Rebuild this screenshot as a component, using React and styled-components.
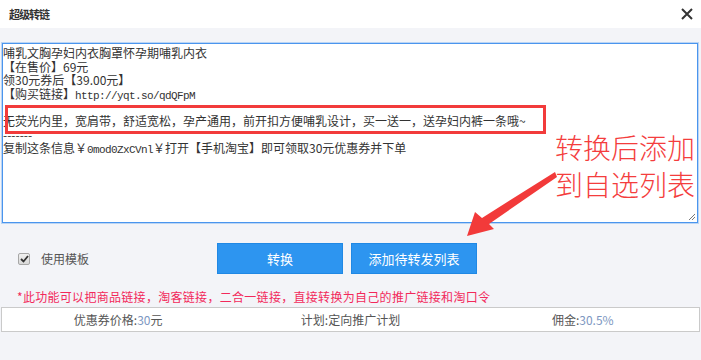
import React from 'react';
import styled, { createGlobalStyle } from 'styled-components';

const GlobalStyle = createGlobalStyle`
  html, body {
    margin: 0;
    padding: 0;
    background: #f3f4f8;
  }
  body {
    font-family: "Noto Sans CJK SC", "Microsoft YaHei", sans-serif;
  }
`;

const Dialog = styled.div`
  position: relative;
  width: 701px;
  height: 360px;
  background: #f3f4f8;
  overflow: hidden;
  display: flex;
  flex-direction: column;
`;

const TitleBar = styled.div`
  flex: none;
  height: 28px;
  background: #fff;
  display: flex;
  align-items: center;
  justify-content: space-between;
  padding: 0 8px 0 9px;
`;

const Title = styled.h1`
  margin: 0;
  font-size: 11px;
  font-weight: 700;
  color: #333;
  letter-spacing: -1px;
`;

const CloseButton = styled.button`
  border: 0;
  padding: 0;
  background: none;
  width: 12px;
  height: 12px;
  display: flex;
  cursor: pointer;
`;

const Editor = styled.div`
  position: relative;
  margin: 15px 3px 0 2px;
  height: 180px;
  box-sizing: border-box;
  padding: 2px 0 0 0;
  background: #fff;
  border: 1px solid #4a95ee;
  box-shadow: 0 0 0 1px rgba(120, 175, 240, 0.45);
  font-size: 12px;
  line-height: 13.6px;
  color: #333;
  white-space: pre;
`;

const Line = styled.div`
  height: 13.6px;
`;

const Code = styled.span`
  font-family: "Liberation Mono", monospace;
  font-size: 11px;
  letter-spacing: -0.6px;
`;

const Highlight = styled.div`
  position: absolute;
  left: 2px;
  top: 61px;
  width: 541px;
  height: 29px;
  box-sizing: border-box;
  border: 3px solid #f23b3b;
  pointer-events: none;
`;

const Grip = styled.svg`
  position: absolute;
  right: 1px;
  bottom: 1px;
`;

const Controls = styled.div`
  display: flex;
  align-items: center;
  height: 31px;
  margin-top: 20px;
  padding-left: 18px;
`;

const CheckLabel = styled.label`
  display: flex;
  align-items: center;
  gap: 11px;
  width: 199px;
  font-size: 12px;
  color: #555;
`;

const CheckBox = styled.span`
  width: 12px;
  height: 12px;
  box-sizing: border-box;
  border: 1px solid #a7a7a7;
  border-radius: 2px;
  background: linear-gradient(#f0f0f0, #d9d9d9);
  display: flex;
  align-items: center;
  justify-content: center;
`;

const Buttons = styled.div`
  display: flex;
  gap: 8px;
`;

const Button = styled.button`
  width: 126px;
  height: 31px;
  border: 1px solid #2088e4;
  background: #2d95f0;
  color: #fff;
  font-family: inherit;
  font-size: 13px;
  padding: 0;
  cursor: pointer;
`;

const Notice = styled.p`
  margin: 16px 0 0;
  padding-left: 17px;
  font-size: 12px;
  line-height: 14px;
  color: #f2295b;
  letter-spacing: 0.3px;
`;

const InfoBar = styled.div`
  margin: 3px 1px 0;
  height: 25px;
  box-sizing: border-box;
  border: 1px solid #cacaca;
  background: #fff;
  display: grid;
  grid-template-columns: repeat(3, 1fr);
  align-items: center;
  text-align: center;
  font-size: 12px;
  color: #555;
`;

const Value = styled.span`
  color: #7d97c2;
`;

const Annotation = styled.div`
  position: absolute;
  left: 555px;
  top: 129px;
  font-size: 28px;
  font-weight: 300;
  line-height: 37px;
  color: #f43d3d;
  white-space: nowrap;
`;

const Arrow = styled.svg`
  position: absolute;
  left: 0;
  top: 0;
  pointer-events: none;
`;

const lines = [
  '哺乳文胸孕妇内衣胸罩怀孕期哺乳内衣',
  '【在售价】69元',
  '领30元券后【39.00元】',
  <>【购买链接】<Code>http://yqt.so/qdQFpM</Code></>,
  '',
  '无荧光内里，宽肩带，舒适宽松，孕产通用，前开扣方便哺乳设计，买一送一，送孕妇内裤一条哦~',
  '-------',
  <>复制这条信息￥<Code>0mod0ZxCVnl</Code>￥打开【手机淘宝】即可领取30元优惠券并下单</>,
];

export default function App() {
  return (
    <Dialog>
      <GlobalStyle />
      <TitleBar>
        <Title>超级转链</Title>
        <CloseButton aria-label="关闭">
          <svg width="12" height="12" viewBox="0 0 12 12">
            <path d="M1 1 L11 11 M11 1 L1 11" stroke="#333" strokeWidth="2" />
          </svg>
        </CloseButton>
      </TitleBar>

      <Editor>
        {lines.map((l, i) => (
          <Line key={i}>{l}</Line>
        ))}
        <Highlight />
        <Grip width="8" height="8" viewBox="0 0 8 8">
          <path d="M7 1 L1 7 M7 4 L4 7" stroke="#777" strokeWidth="1" />
        </Grip>
      </Editor>

      <Controls>
        <CheckLabel>
          <CheckBox>
            <svg width="9" height="8" viewBox="0 0 9 8">
              <path d="M1 4 L3.5 6.5 L8 1" stroke="#333" strokeWidth="1.8" fill="none" />
            </svg>
          </CheckBox>
          使用模板
        </CheckLabel>
        <Buttons>
          <Button>转换</Button>
          <Button>添加待转发列表</Button>
        </Buttons>
      </Controls>

      <Notice>*此功能可以把商品链接，淘客链接，二合一链接，直接转换为自己的推广链接和淘口令</Notice>

      <InfoBar>
        <span>优惠券价格:<Value>30</Value>元</span>
        <span>计划:定向推广计划</span>
        <span>佣金:<Value>30.5%</Value></span>
      </InfoBar>

      <Annotation>
        转换后添加
        <br />
        到自选列表
      </Annotation>
      <Arrow width="701" height="360" viewBox="0 0 701 360">
        <polygon
          points="555,172 557,177 489,224 494,229 467,236 475,212 482,218"
          fill="#f23a3a"
        />
      </Arrow>
    </Dialog>
  );
}
